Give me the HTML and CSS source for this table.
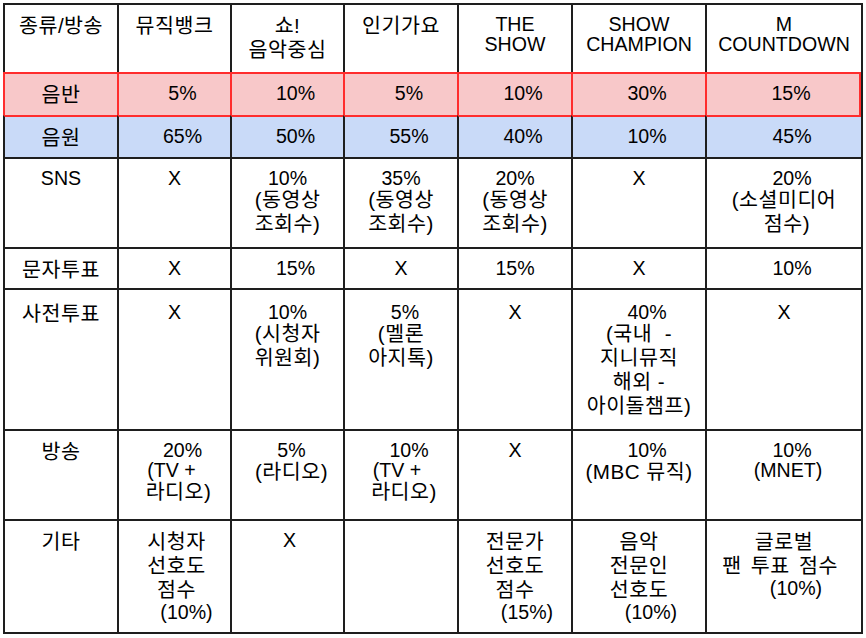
FILE: index.html
```html
<!DOCTYPE html>
<html lang="ko">
<head>
<meta charset="utf-8">
<title>음악방송 순위 집계 기준</title>
<link rel="stylesheet" href="styles.css">
</head>
<body>
<div class="sheet">
  <!-- header -->
  <div class="c"><span class="ln k">종류/방송</span></div>
  <div class="c"><span class="ln k">뮤직뱅크</span></div>
  <div class="c"><span class="ln k">쇼!</span><span class="ln k">음악중심</span></div>
  <div class="c"><span class="ln k">인기가요</span></div>
  <div class="c"><span class="ln">THE</span><span class="ln">SHOW</span></div>
  <div class="c"><span class="ln">SHOW</span><span class="ln">CHAMPION</span></div>
  <div class="c"><span class="ln">M</span><span class="ln">COUNTDOWN</span></div>

  <!-- 음반 -->
  <div class="c disc"><span class="ln k">음반</span></div>
  <div class="c disc"><span class="ln sr8">5%</span></div>
  <div class="c disc"><span class="ln sr8">10%</span></div>
  <div class="c disc"><span class="ln sr8">5%</span></div>
  <div class="c disc"><span class="ln sr8">10%</span></div>
  <div class="c disc"><span class="ln sr8">30%</span></div>
  <div class="c disc last"><span class="ln sr8">15%</span></div>

  <!-- 음원 -->
  <div class="c digital"><span class="ln k">음원</span></div>
  <div class="c digital"><span class="ln sr8">65%</span></div>
  <div class="c digital"><span class="ln sr8">50%</span></div>
  <div class="c digital"><span class="ln sr8">55%</span></div>
  <div class="c digital"><span class="ln sr8">40%</span></div>
  <div class="c digital"><span class="ln sr8">10%</span></div>
  <div class="c digital"><span class="ln sr8">45%</span></div>

  <!-- SNS -->
  <div class="c"><span class="ln">SNS</span></div>
  <div class="c"><span class="ln">X</span></div>
  <div class="c"><span class="ln">10%</span><span class="ln k">(동영상</span><span class="ln k">조회수)</span></div>
  <div class="c"><span class="ln">35%</span><span class="ln k">(동영상</span><span class="ln k">조회수)</span></div>
  <div class="c"><span class="ln">20%</span><span class="ln k">(동영상</span><span class="ln k">조회수)</span></div>
  <div class="c"><span class="ln">X</span></div>
  <div class="c"><span class="ln sr8">20%</span><span class="ln k">(소셜미디어</span><span class="ln k sr3">점수)</span></div>

  <!-- 문자투표 -->
  <div class="c"><span class="ln k">문자투표</span></div>
  <div class="c"><span class="ln">X</span></div>
  <div class="c"><span class="ln sr8">15%</span></div>
  <div class="c"><span class="ln">X</span></div>
  <div class="c"><span class="ln">15%</span></div>
  <div class="c"><span class="ln">X</span></div>
  <div class="c"><span class="ln sr8">10%</span></div>

  <!-- 사전투표 -->
  <div class="c pre"><span class="ln k">사전투표</span></div>
  <div class="c pre"><span class="ln">X</span></div>
  <div class="c pre"><span class="ln">10%</span><span class="ln k">(시청자</span><span class="ln k">위원회)</span></div>
  <div class="c pre"><span class="ln sr4">5%</span><span class="ln k">(멜론</span><span class="ln k">아지톡)</span></div>
  <div class="c pre"><span class="ln">X</span></div>
  <div class="c pre"><span class="ln sr8">40%</span><span class="ln k">(국내  -</span><span class="ln k">지니뮤직</span><span class="ln k">해외 -</span><span class="ln k">아이돌챔프)</span></div>
  <div class="c pre"><span class="ln">X</span></div>

  <!-- 방송 -->
  <div class="c"><span class="ln k">방송</span></div>
  <div class="c"><span class="ln sr8">20%</span><span class="ln sl3">(TV +</span><span class="ln k sr4">라디오)</span></div>
  <div class="c"><span class="ln sr4">5%</span><span class="ln k sr4">(라디오)</span></div>
  <div class="c"><span class="ln sr8">10%</span><span class="ln sl4">(TV +</span><span class="ln k sr3">라디오)</span></div>
  <div class="c"><span class="ln">X</span></div>
  <div class="c"><span class="ln sr8">10%</span><span class="ln k">(MBC 뮤직)</span></div>
  <div class="c"><span class="ln sr8">10%</span><span class="ln sr4">(MNET)</span></div>

  <!-- 기타 -->
  <div class="c"><span class="ln k">기타</span></div>
  <div class="c"><span class="ln k sr2">시청자</span><span class="ln k sr2">선호도</span><span class="ln k sr2">점수</span><span class="ln sr12">(10%)</span></div>
  <div class="c"><span class="ln sr2">X</span></div>
  <div class="c"></div>
  <div class="c"><span class="ln k">전문가</span><span class="ln k">선호도</span><span class="ln k">점수</span><span class="ln sr12">(15%)</span></div>
  <div class="c"><span class="ln k">음악</span><span class="ln k">전문인</span><span class="ln k">선호도</span><span class="ln sr12">(10%)</span></div>
  <div class="c"><span class="ln k">글로벌</span><span class="ln k sl4 wide">팬 투표 점수</span><span class="ln sr12">(10%)</span></div>
</div>
</body>
</html>
```

FILE: styles.css
```css
* {
  box-sizing: border-box;
}

html, body {
  margin: 0;
  padding: 0;
  background: #ffffff;
}

body {
  padding: 3px 0 0 3px;
  font-family: "Liberation Sans", "Noto Sans CJK KR", sans-serif;
  font-size: 19.6px;
  color: #000000;
}

.sheet {
  display: grid;
  grid-template-columns: 114px 113px 113px 114px 114px 134px 156px;
  grid-template-rows: 69px 43px 42px 90px 41px 141px 90px 113px;
  width: 860px;
  border-right: 2px solid #1e1e1e;
  border-bottom: 2px solid #1e1e1e;
}

.c {
  border-left: 2px solid #1e1e1e;
  border-top: 2px solid #1e1e1e;
  padding-top: 9px;
  text-align: center;
  overflow: hidden;
}

.ln {
  display: block;
  height: 20px;
  line-height: 20px;
  white-space: pre;
}

.ln.k {
  height: 24px;
  line-height: 24px;
  font-size: 20.6px;
  letter-spacing: 0.5px;
}

.wide {
  word-spacing: 3px;
}

.disc {
  background: #f8c8c9;
  border-left-color: #ff2d2d;
  border-top-color: #ff2d2d;
}

.disc.last {
  border-right: 2px solid #ff2d2d;
}

.digital {
  background: #c9daf8;
  border-top-color: #ff2d2d;
}

.pre {
  padding-top: 12px;
}

/* per-line horizontal nudges (leading / trailing blanks in the source cells) */
.sr2 { padding-left: 4px; }
.sr3 { padding-left: 6px; }
.sr4 { padding-left: 8px; }
.sr8 { padding-left: 16px; }
.sr12 { padding-left: 24px; }
.sl3 { padding-right: 6px; }
.sl4 { padding-right: 8px; }
```
